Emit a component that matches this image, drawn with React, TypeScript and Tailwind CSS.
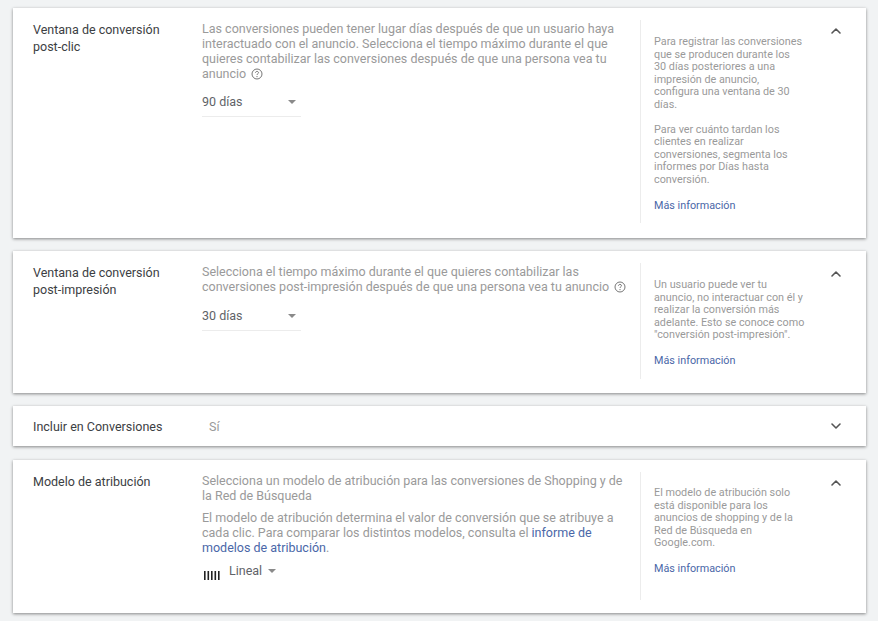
import React from 'react';
import { ChevronUp, ChevronDown } from 'lucide-react';

function HelpIcon() {
  return (
    <svg viewBox="0 0 12 12" className="inline-block w-[12px] h-[12px] ml-[2px] align-[-2px]" fill="none">
      <circle cx="6" cy="6" r="5" stroke="#666" strokeWidth="0.9" />
      <path d="M4.5 4.8C4.5 3.9 5.2 3.4 6 3.4C6.8 3.4 7.5 3.9 7.5 4.7C7.5 5.7 6 5.8 6 7" stroke="#666" strokeWidth="0.9" />
      <circle cx="6" cy="8.6" r="0.6" fill="#666" />
    </svg>
  );
}

function Dropdown({ value, className }: { value: string; className: string }) {
  return (
    <div className={`w-[99px] h-[25px] border-b border-[#ececec] flex justify-between items-start pt-[1px] pr-[5px] text-[12.5px] leading-[18px] text-[#5f6368] ${className}`}>
      <span>{value}</span>
      <div className="mt-[7px] w-0 h-0 border-x-[4px] border-x-transparent border-t-[4px] border-t-[#8a8a8a]" />
    </div>
  );
}

function Side({ children, className }: { children: React.ReactNode; className: string }) {
  return (
    <div className={`w-[164px] shrink-0 -mt-[1px] border-l border-[#ececec] pl-[13px] whitespace-nowrap text-[10.8px] leading-[12.6px] text-[#9a9a9a] ${className}`}>
      {children}
    </div>
  );
}

function MoreInfo() {
  return <a className="block mt-[13px] text-[#4a67a8]">Más información</a>;
}

function Row({ title, children, side, open = true, className }: { title: React.ReactNode; children: React.ReactNode; side?: React.ReactNode; open?: boolean; className: string }) {
  return (
    <section className={`bg-white shadow-[0_1px_3px_rgba(0,0,0,0.45)] flex pl-[20px] ${className}`}>
      <div className="w-[169px] shrink-0 text-[12.5px] leading-[17px] text-[#3c4043]">{title}</div>
      <div className="w-[438px] shrink-0">{children}</div>
      {side}
      <div className="ml-auto mr-[22px]">
        {open
          ? <ChevronUp className="w-[16px] h-[16px] mt-[2px] text-[#555]" strokeWidth={2.4} />
          : <ChevronDown className="w-[16px] h-[16px] text-[#555]" strokeWidth={2.4} />}
      </div>
    </section>
  );
}

export default function App() {
  return (
    <div className="w-[878px] h-[621px] overflow-hidden bg-[#f1f3f4] px-[13px] pt-[8px] font-['Roboto',sans-serif]">
      <div className="w-[853px] flex flex-col gap-[13px]">
        <Row
          className="h-[230px] pt-[13px]"
          title={<>Ventana de conversión<br />post-clic</>}
          side={
            <Side className="h-[203px] pt-[16px]">
              <p>Para registrar las conversiones<br />que se producen durante los<br />30 días posteriores a una<br />impresión de anuncio,<br />configura una ventana de 30<br />días.</p>
              <p className="mt-[12px]">Para ver cuánto tardan los<br />clientes en realizar<br />conversiones, segmenta los<br />informes por Días hasta<br />conversión.</p>
              <MoreInfo />
            </Side>
          }
        >
          <p className="text-[12.5px] leading-[15px] text-[#9a9a9a]">
            Las conversiones pueden tener lugar días después de que un usuario haya<br />
            interactuado con el anuncio. Selecciona el tiempo máximo durante el que<br />
            quieres contabilizar las conversiones después de que una persona vea tu<br />
            anuncio <HelpIcon />
          </p>
          <Dropdown value="90 días" className="mt-[11px]" />
        </Row>

        <Row
          className="h-[142px] pt-[13px]"
          title={<>Ventana de conversión<br />post-impresión</>}
          side={
            <Side className="h-[116px] pt-[16px]">
              <p>Un usuario puede ver tu<br />anuncio, no interactuar con él y<br />realizar la conversión más<br />adelante. Esto se conoce como<br />"conversión post-impresión".</p>
              <MoreInfo />
            </Side>
          }
        >
          <p className="text-[12.5px] leading-[15px] text-[#9a9a9a]">
            Selecciona el tiempo máximo durante el que quieres contabilizar las<br />
            conversiones post-impresión después de que una persona vea tu anuncio <HelpIcon />
          </p>
          <Dropdown value="30 días" className="mt-[12px]" />
        </Row>

        <Row className="h-[40px] pt-[12px]" title="Incluir en Conversiones" open={false}>
          <span className="block pl-[7px] text-[12.5px] leading-[17px] text-[#9a9a9a]">Sí</span>
        </Row>

        <Row
          className="h-[153px] pt-[13px] mt-[1px]"
          title="Modelo de atribución"
          side={
            <Side className="h-[128px] pt-[15px]">
              <p>El modelo de atribución solo<br />está disponible para los<br />anuncios de shopping y de la<br />Red de Búsqueda en<br />Google.com.</p>
              <MoreInfo />
            </Side>
          }
        >
          <p className="text-[12.5px] leading-[15px] text-[#9a9a9a]">
            Selecciona un modelo de atribución para las conversiones de Shopping y de<br />
            la Red de Búsqueda
          </p>
          <p className="mt-[7px] text-[12.5px] leading-[15px] text-[#9a9a9a]">
            El modelo de atribución determina el valor de conversión que se atribuye a<br />
            cada clic. Para comparar los distintos modelos, consulta el <a className="text-[#4a67a8]">informe de<br />modelos de atribución</a>.
          </p>
          <div className="mt-[7px] flex items-start text-[12.5px] leading-[18px] text-[#5f6368]">
            <svg viewBox="0 0 16 9" className="w-[16px] h-[9px] mt-[9px] ml-[2px] mr-[9px]">
              <path d="M0.8 0V9M4.3 0V9M7.8 0V9M11.3 0V9M14.8 0V9" stroke="#222" strokeWidth="1.6" />
            </svg>
            <span>Lineal</span>
            <div className="ml-[6px] mt-[7px] w-0 h-0 border-x-[4px] border-x-transparent border-t-[4px] border-t-[#8a8a8a]" />
          </div>
        </Row>
      </div>
    </div>
  );
}
